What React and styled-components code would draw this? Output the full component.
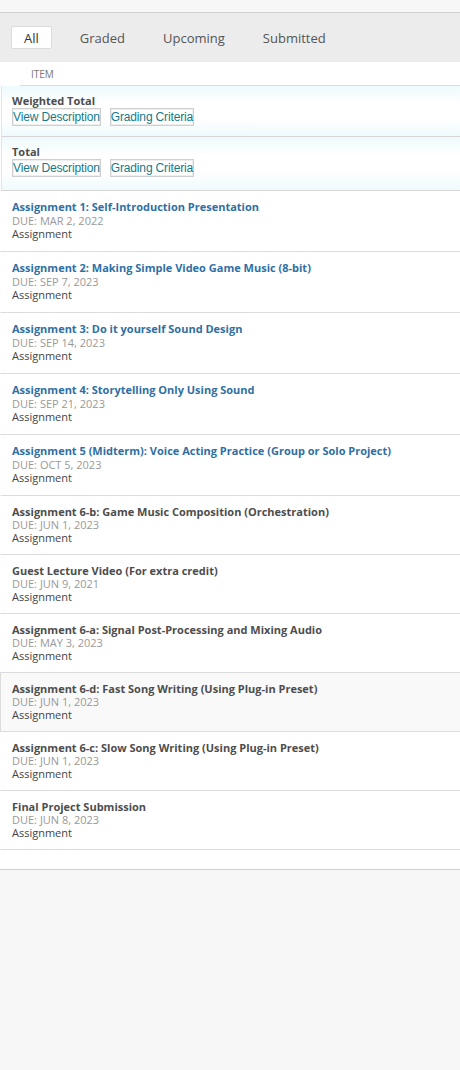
import React from "react";
import styled, { createGlobalStyle } from "styled-components";

const GlobalStyle = createGlobalStyle`
  body {
    margin: 0;
    background: #f7f7f7;
    font-family: "Open Sans", "Liberation Sans", sans-serif;
  }
`;

const Page = styled.div`
  padding-top: 12px;
  min-height: 1058px;
`;

const Panel = styled.div`
  border-top: 1px solid #cfcfcf;
  border-bottom: 1px solid #cfcfcf;
  background: #fff;
  padding-bottom: 19px;
`;

const TabBar = styled.div`
  display: flex;
  align-items: center;
  height: 49px;
  padding-left: 11px;
  background: #ececec;
`;

const Tab = styled.button`
  height: 23px;
  margin-right: ${(p) => p.gap}px;
  padding: 0 ${(p) => (p.active ? "12px" : "0")};
  border: 1px solid ${(p) => (p.active ? "#dcdcdc" : "transparent")};
  border-radius: 2px;
  background: ${(p) => (p.active ? "#fff" : "transparent")};
  color: ${(p) => (p.active ? "#333" : "#555")};
  font-family: "Open Sans", sans-serif;
  font-size: 13px;
  cursor: pointer;
`;

const HeaderRow = styled.div`
  box-sizing: border-box;
  height: 24px;
  margin-left: 20px;
  padding: 1px 0 0 11px;
  border-bottom: 1px solid #dcdcdc;
  display: flex;
  align-items: center;
  color: #777;
  font-size: 10px;
  text-transform: uppercase;
`;

const List = styled.div`
  padding-left: 1px;
`;

const TotalBox = styled.div`
  padding: 8px 10px ${(p) => p.bottom}px 10px;
  border-left: 1px solid #dfe6ea;
  border-bottom: 1px solid #d6d6d6;
  background: linear-gradient(#eefafd, #ffffff 35%, #ffffff 65%, #eefafd);
`;

const TotalLabel = styled.div`
  color: #4d4d4d;
  font-size: 11px;
  font-weight: 700;
  line-height: 14px;
`;

const Actions = styled.div`
  display: flex;
  gap: 9px;
`;

const LinkButton = styled.button`
  height: 18px;
  padding: 0;
  border: 1px solid #cfcfcf;
  box-shadow: inset 0 0 0 1px #eee;
  background: #fff;
  color: #117a8b;
  font-family: "Liberation Sans", Arial, sans-serif;
  font-size: 12px;
  letter-spacing: -0.15px;
  white-space: nowrap;
  cursor: pointer;
`;

const Row = styled.div`
  padding: ${(p) => (p.link ? "8px 10px 11px 11px" : "9px 10px 10px 11px")};
  border-bottom: 1px solid #dcdcdc;
  border-left: 1px solid ${(p) => (p.hover ? "#dcdcdc" : "transparent")};
  margin-left: -1px;
  background: ${(p) => (p.hover ? "#f9f9f9" : "#fff")};
  ${(p) => p.hover && "border-top: 1px solid #dcdcdc; margin-top: -1px;"}
`;

const Title = styled.div`
  color: ${(p) => (p.link ? "#2f6fa3" : "#4d4d4d")};
  font-size: 11px;
  font-weight: 700;
  line-height: ${(p) => (p.link ? "15px" : "13px")};
`;

const Due = styled.div`
  color: #999;
  font-size: 11px;
  line-height: 13px;
`;

const Kind = styled.div`
  color: #444;
  font-size: 11px;
  line-height: 13px;
`;

const tabs = [
  { label: "All", gap: 27, active: true },
  { label: "Graded", gap: 36 },
  { label: "Upcoming", gap: 36 },
  { label: "Submitted", gap: 0 },
];

const items = [
  { title: "Assignment 1: Self-Introduction Presentation", due: "MAR 2, 2022", link: true },
  { title: "Assignment 2: Making Simple Video Game Music (8-bit)", due: "SEP 7, 2023", link: true },
  { title: "Assignment 3: Do it yourself Sound Design", due: "SEP 14, 2023", link: true },
  { title: "Assignment 4: Storytelling Only Using Sound", due: "SEP 21, 2023", link: true },
  { title: "Assignment 5 (Midterm): Voice Acting Practice (Group or Solo Project)", due: "OCT 5, 2023", link: true },
  { title: "Assignment 6-b: Game Music Composition (Orchestration)", due: "JUN 1, 2023" },
  { title: "Guest Lecture Video (For extra credit)", due: "JUN 9, 2021" },
  { title: "Assignment 6-a: Signal Post-Processing and Mixing Audio", due: "MAY 3, 2023" },
  { title: "Assignment 6-d: Fast Song Writing (Using Plug-in Preset)", due: "JUN 1, 2023", hover: true },
  { title: "Assignment 6-c: Slow Song Writing (Using Plug-in Preset)", due: "JUN 1, 2023" },
  { title: "Final Project Submission", due: "JUN 8, 2023" },
];

const TotalActions = () => (
  <Actions>
    <LinkButton>View Description</LinkButton>
    <LinkButton>Grading Criteria</LinkButton>
  </Actions>
);

const App = () => {
  return (
    <Page>
      <GlobalStyle />
      <Panel>
        <TabBar>
          {tabs.map((t) => (
            <Tab key={t.label} active={t.active} gap={t.gap}>
              {t.label}
            </Tab>
          ))}
        </TabBar>
        <HeaderRow>Item</HeaderRow>
        <List>
          <TotalBox bottom={10}>
            <TotalLabel>Weighted Total</TotalLabel>
            <TotalActions />
          </TotalBox>
          <TotalBox bottom={13}>
            <TotalLabel>Total</TotalLabel>
            <TotalActions />
          </TotalBox>
          {items.map((it) => (
            <Row key={it.title} link={it.link} hover={it.hover}>
              <Title link={it.link}>{it.title}</Title>
              <Due>DUE: {it.due}</Due>
              <Kind>Assignment</Kind>
            </Row>
          ))}
        </List>
      </Panel>
    </Page>
  );
};

export default App;
